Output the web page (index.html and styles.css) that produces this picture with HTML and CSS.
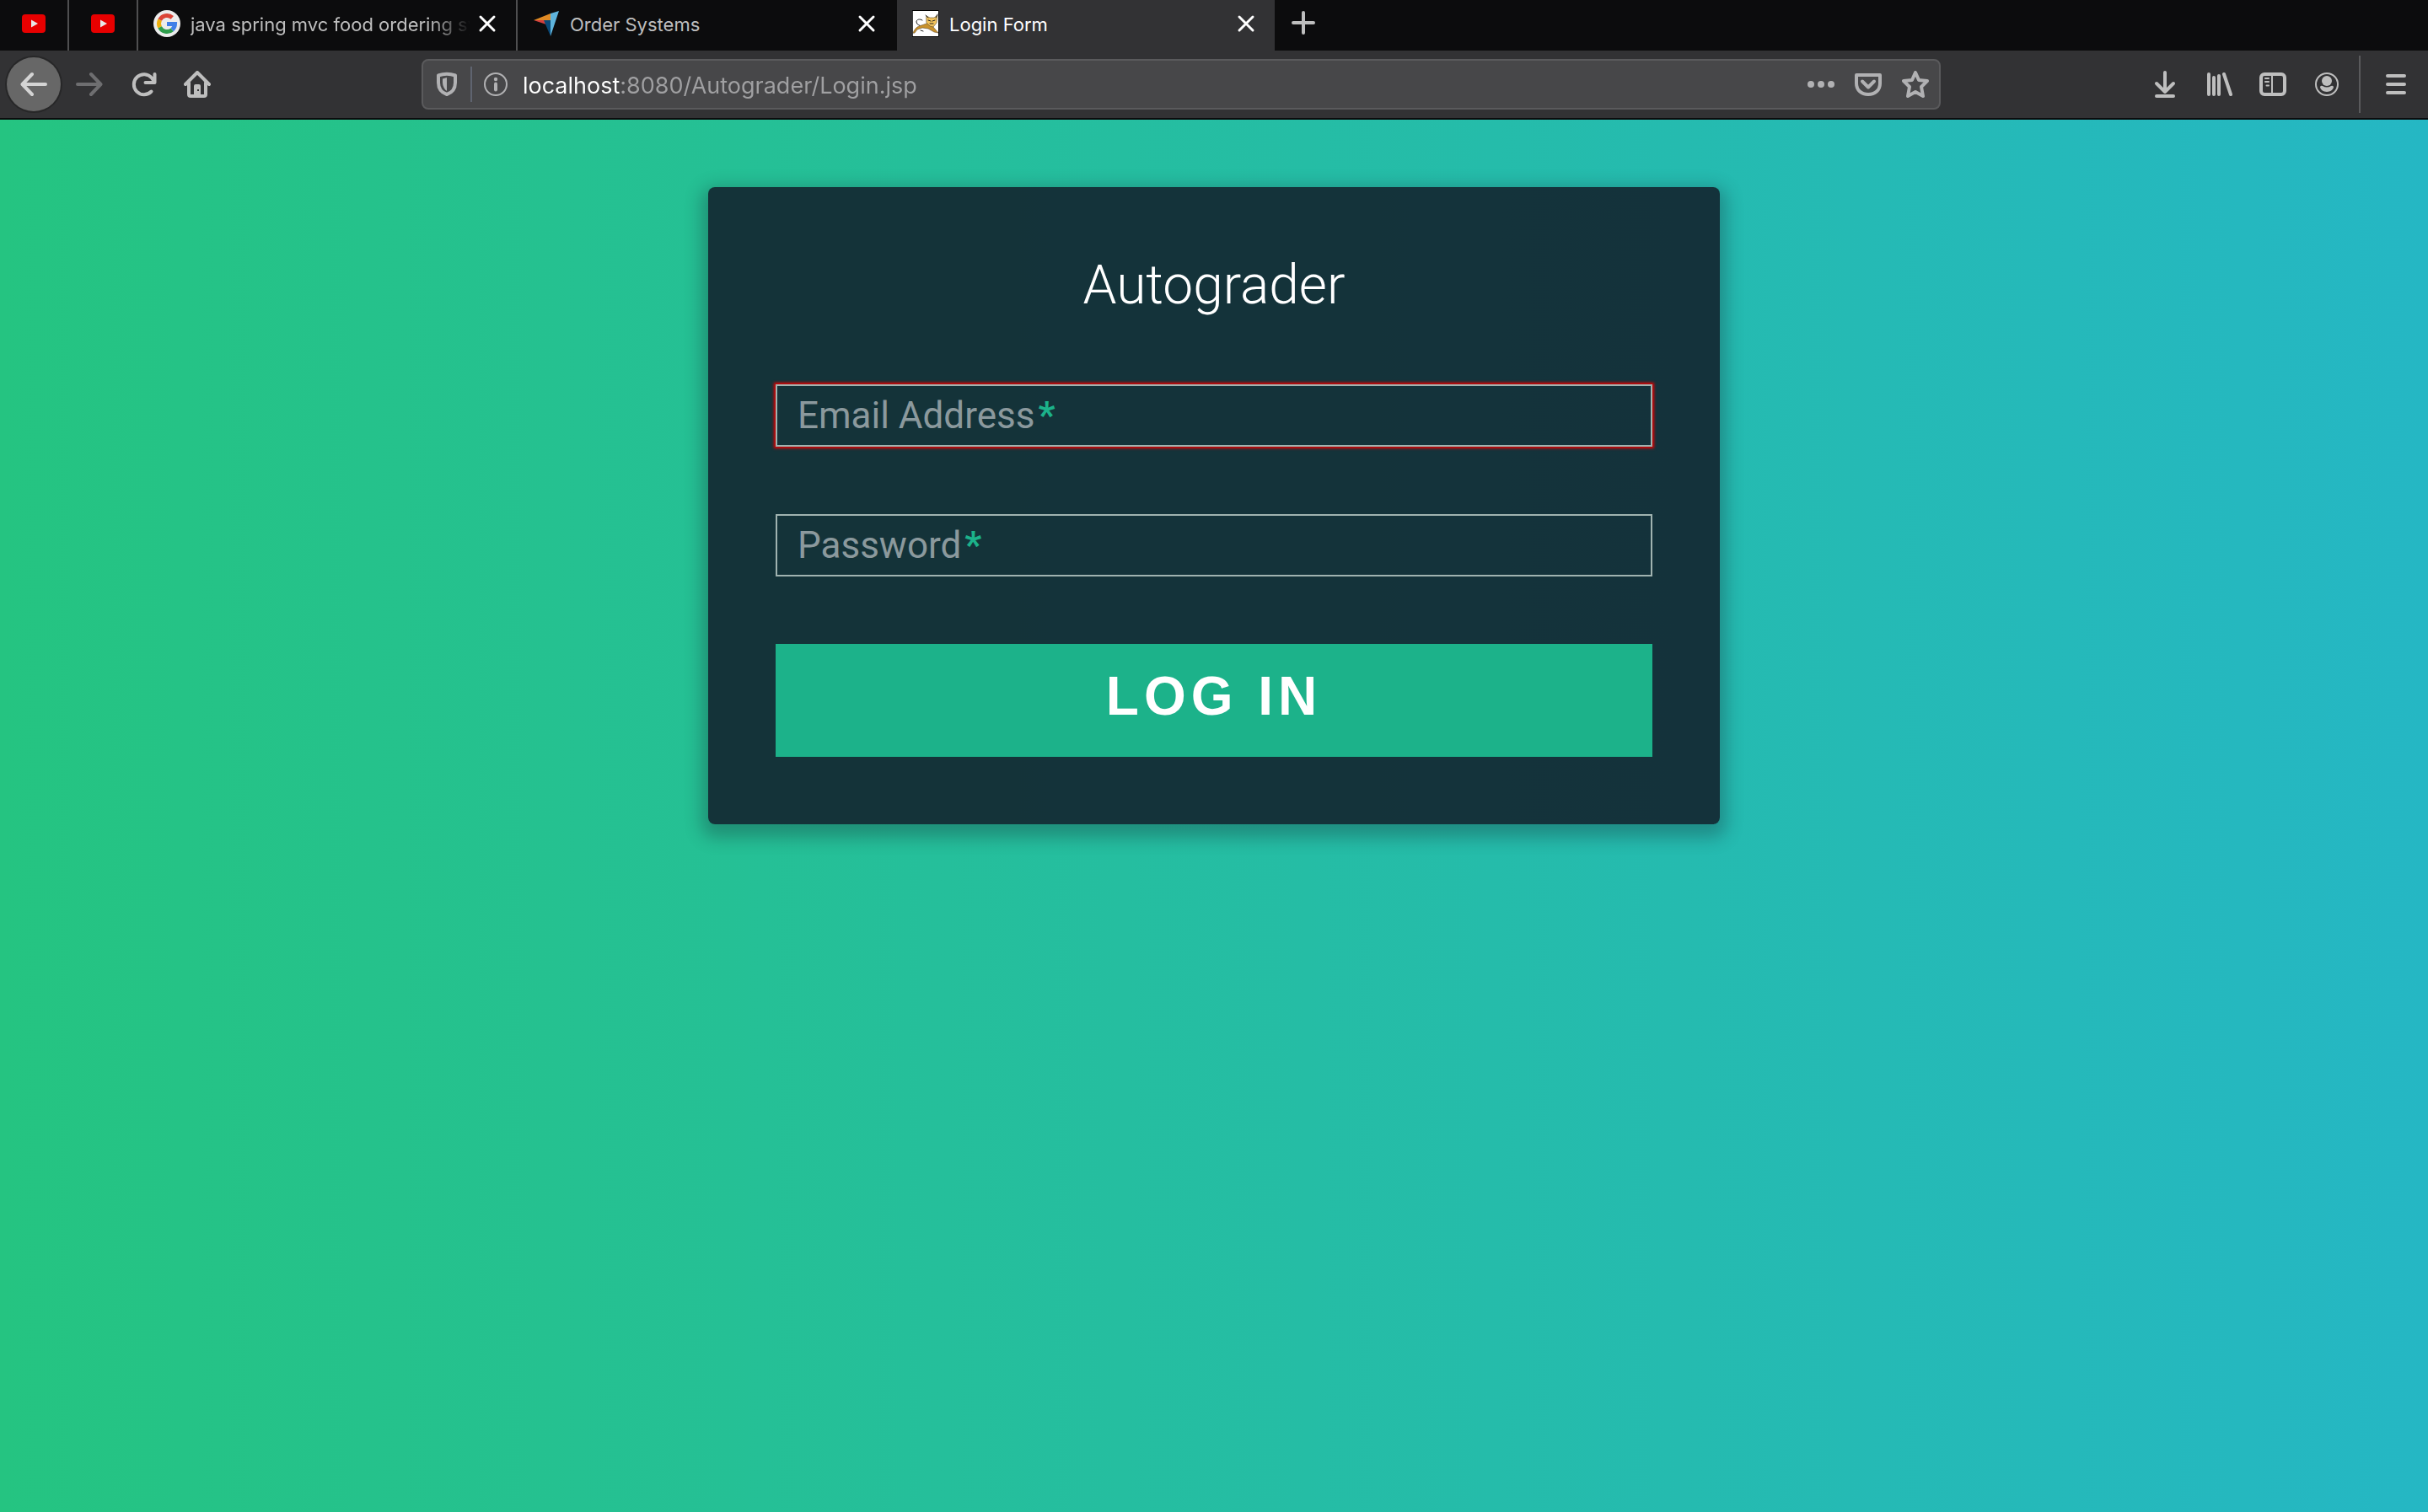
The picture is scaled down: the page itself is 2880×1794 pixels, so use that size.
FILE: index.html
```
<!DOCTYPE html>
<html lang="en">
<head>
<meta charset="utf-8">
<title>Login Form</title>
<link rel="stylesheet" href="styles.css">
</head>
<body>
<header class="browser">
  <nav class="tabs" aria-label="Tabs">
    <a class="tab tab-pinned" href="#" aria-label="YouTube">
      <svg class="icon" viewBox="0 0 32 32"><rect x="2" y="5" width="28" height="22" rx="4" fill="#e80000"/><path d="M13 11.500v9l8-4.500z" fill="#e8e8e8"/></svg>
    </a>
    <a class="tab tab-pinned" href="#" aria-label="YouTube">
      <svg class="icon" viewBox="0 0 32 32"><rect x="2" y="5" width="28" height="22" rx="4" fill="#e80000"/><path d="M13 11.500v9l8-4.500z" fill="#e8e8e8"/></svg>
    </a>
    <div class="tab">
      <svg class="icon" viewBox="0 0 32 32"><circle cx="16" cy="16" r="16" fill="#ececec"/><g fill="none" stroke-width="5" stroke-linecap="butt"><path d="M22.300 8.800A9.500 9.500 0 0 0 7.600 11.600" stroke="#db4437"/><path d="M7.600 11.600a9.500 9.500 0 0 0 0 8.800" stroke="#eeb00c"/><path d="M7.600 20.400a9.500 9.500 0 0 0 14.600 2.900" stroke="#2f9e4c"/><path d="M22.200 23.300A9.500 9.500 0 0 0 25.500 16.400H16" stroke="#3f7fe8" stroke-linejoin="miter"/></g></svg>
      <a class="tab-title tab-title-long" href="#">java spring mvc food ordering sy</a>
      <button class="tab-close" type="button" aria-label="Close tab"><svg class="icon" viewBox="0 0 32 32"><path d="M8 8l16 16M24 8L8 24"/></svg></button>
    </div>
    <div class="tab">
      <svg class="icon" viewBox="0 0 32 32"><path d="M1 12L21 4v8z" fill="#e08a24"/><path d="M1 12h13l2 5z" fill="#d43f3f"/><path d="M13 12h8v19z" fill="#0a4a78"/><path d="M21 4l10-3-10 30z" fill="#5fb4dc"/></svg>
      <a class="tab-title" href="#">Order Systems</a>
      <button class="tab-close" type="button" aria-label="Close tab"><svg class="icon" viewBox="0 0 32 32"><path d="M8 8l16 16M24 8L8 24"/></svg></button>
    </div>
    <div class="tab tab-active">
      <svg class="icon" viewBox="0 0 32 32"><path d="M.5.500h31v31H.500z" fill="#fff" stroke="#000" stroke-width="1"/><path d="M12 12c-3-2-7-1-7 2 0 4 5 3 5 6M10 24l3 1" fill="none" stroke="#222" stroke-width="1"/><path d="M1 27c2-5 5-8 10-9 3-1 6-2 8-3l6 5 6 7-5-1-7-4-7-1-6 2-3 4z" fill="#c8912c" stroke="#4a3820" stroke-width=".5"/><path d="M17 7l4 2h5l4-3-1 9-4 5-4-1-4-4z" fill="#f2c35c" stroke="#5a4a28" stroke-width=".6"/><path d="M16 6l3 3M30 5l-2 4M19 12l3 1m5-1l-3 1m-3 3h4" stroke="#222" stroke-width="1"/></svg>
      <a class="tab-title" href="#" aria-current="page">Login Form</a>
      <button class="tab-close" type="button" aria-label="Close tab"><svg class="icon" viewBox="0 0 32 32"><path d="M8 8l16 16M24 8L8 24"/></svg></button>
    </div>
    <button class="tab-new" type="button" aria-label="New tab"><svg class="icon" viewBox="0 0 32 32"><path d="M16 3v24M4 15h24"/></svg></button>
  </nav>
  <div class="toolbar">
    <button class="tool tool-back" type="button" aria-label="Back"><svg class="icon" viewBox="0 0 32 32"><path d="M30 16H3M14 4L2.500 16 14 28"/></svg></button>
    <button class="tool tool-disabled" type="button" aria-label="Forward" disabled><svg class="icon" viewBox="0 0 32 32"><path d="M2 16h27M18 4l11.500 12L18 28"/></svg></button>
    <button class="tool" type="button" aria-label="Reload"><svg class="icon" viewBox="0 0 32 32"><path d="M25.500 24.500A12 12 0 1 1 26 8.500l2 3M29.500 4v10H18.500"/></svg></button>
    <button class="tool" type="button" aria-label="Home"><svg class="icon" viewBox="0 0 32 32"><path d="M2 16L16 2l14 14M6 14v14q0 2 2 2h16q2 0 2-2V14"/><path class="solid" fill-rule="evenodd" d="M12 30V18q0-2 2-2h4q2 0 2 2v12zM16 22v2h2v-2z"/></svg></button>
    <div class="spacer"></div>
    <div class="address">
      <svg class="icon" viewBox="0 0 32 32"><path d="M6 5.500Q16 2 26 5.500V14c0 7-4 12-10 14C10 26 6 21 6 14z"/><path class="solid" d="M11 9.500L16 8v16c-3-2-5-6-5-10z"/></svg>
      <span class="address-divider"></span>
      <svg class="icon" viewBox="0 0 32 32"><circle cx="16" cy="16" r="13" stroke-width="2"/><path d="M16 15.500v7"/><circle class="solid" cx="16" cy="10" r="2.200"/></svg>
      <input class="address-input" type="text" aria-label="Address" value="localhost:8080/Autograder/Login.jsp">
      <div class="address-actions">
        <button class="address-button" type="button" aria-label="Page actions"><svg class="icon" viewBox="0 0 32 32"><g class="solid"><circle cx="4" cy="16" r="4"/><circle cx="16" cy="16" r="4"/><circle cx="28" cy="16" r="4"/></g></svg></button>
        <button class="address-button" type="button" aria-label="Save to Pocket"><svg class="icon" viewBox="0 0 32 32"><path d="M2 5h28v10c0 8-6 13-14 13S2 23 2 15z"/><path d="M9 12.500l7 7 7-7"/></svg></button>
        <button class="address-button" type="button" aria-label="Bookmark"><svg class="icon" viewBox="0 0 32 32"><path d="M16 2l4 9 10 1-7 7 2 11-9-5-9 5 2-11-7-7 10-1z"/></svg></button>
      </div>
    </div>
    <div class="spacer"></div>
    <button class="tool" type="button" aria-label="Downloads"><svg class="icon" viewBox="0 0 32 32"><path d="M16 2v23M6 15l10 10 10-10M6 30h20"/></svg></button>
    <button class="tool" type="button" aria-label="Library"><svg class="icon" viewBox="0 0 32 32"><path d="M4 4v24M10 8v20M16 6v22M22 4l8 24"/></svg></button>
    <button class="tool" type="button" aria-label="Sidebars"><svg class="icon" viewBox="0 0 32 32"><rect x="2" y="4" width="28" height="24" rx="4"/><path d="M15 4v24M7 9h4M7 13h4M8.500 17.500h2.500" stroke-width="2"/></svg></button>
    <button class="tool" type="button" aria-label="Account"><svg class="icon" viewBox="0 0 32 32"><circle cx="16" cy="16" r="13" stroke-width="2"/><circle class="solid" cx="16" cy="12" r="6"/><path class="solid" d="M8 19q1-2 3-1 5 3 10 0 2-1 3 1c0 3-4 6-8 6s-8-3-8-6z"/></svg></button>
    <span class="toolbar-divider"></span>
    <button class="tool" type="button" aria-label="Menu"><svg class="icon" viewBox="0 0 32 32"><path d="M6 6h20M6 16h20M6 26h20"/></svg></button>
  </div>
</header>
<main class="page">
  <form class="card">
    <h1 class="card-title">Autograder</h1>
    <div class="field">
      <label class="field-label" for="email">Email Address<span class="required">*</span></label>
      <input class="field-input field-invalid" id="email" type="email" required>
    </div>
    <div class="field">
      <label class="field-label" for="password">Password<span class="required">*</span></label>
      <input class="field-input" id="password" type="password" required>
    </div>
    <button class="submit" type="submit">Log In</button>
  </form>
</main>
</body>
</html>
```

FILE: styles.css
```
* {
  box-sizing: border-box;
}

body {
  margin: 0;
  min-height: 100vh;
  display: flex;
  flex-direction: column;
  font-family: Roboto, "Liberation Sans", sans-serif;
}

button,
input {
  font: inherit;
  color: inherit;
  margin: 0;
  padding: 0;
  border: 0;
  background: none;
}

/* Browser chrome */

.browser {
  font-family: Inter, "Liberation Sans", sans-serif;
  color: #bebebe;
  background: #323234;
  border-bottom: 2px solid #0c0c0d;
}

.icon {
  display: block;
  flex: none;
  width: 32px;
  height: 32px;
  fill: none;
  stroke-width: 4;
  stroke-linecap: round;
  stroke-linejoin: round;
}

.tool .icon,
.address .icon,
.tab-close .icon,
.tab-new .icon {
  stroke: currentColor;
}

.icon .solid {
  fill: currentColor;
  stroke: none;
}

.tabs {
  display: flex;
  height: 60px;
  background: #0c0c0d;
}

.tab {
  display: flex;
  align-items: center;
  flex: 0 1 450px;
  min-width: 0;
  padding: 0 18px 4px;
  border-right: 2px solid #4f4f50;
  font-size: 22px;
}

.tab-pinned {
  flex: 0 0 82px;
  padding: 0 24px 4px;
}

.tab:has(+ .tab-active) {
  border-right-color: #0c0c0d;
}

.tab-active {
  flex-basis: 448px;
  border-right: 0;
  background: #323234;
  color: #fff;
}

.tab-title {
  flex: 1;
  min-width: 0;
  margin: 0 4px 0 12px;
  padding-top: 2px;
  overflow: hidden;
  white-space: nowrap;
  line-height: 32px;
  color: inherit;
  text-decoration: none;
}

.tab-title-long {
  mask-image: linear-gradient(to left, transparent, #000 48px);
}

.tab-close {
  color: #fff;
}

.tab-close .icon {
  stroke-width: 3;
}

.tab-new {
  width: 64px;
  margin-left: 2px;
  padding: 0 16px 4px;
}

.toolbar {
  display: flex;
  align-items: center;
  height: 80px;
  padding: 0 6px 0 8px;
}

.tool {
  flex: none;
  width: 64px;
  height: 64px;
  padding: 16px;
}

.tool-back {
  margin-right: 2px;
  border-radius: 50%;
  background: #676767;
  color: #d4d4d4;
  box-shadow: 0 0 0 2px #272728;
}

.tool-disabled {
  color: #6e6e70;
}

.toolbar-divider {
  width: 2px;
  height: 68px;
  margin: 0 10px 0 6px;
  background: #5a5a5c;
}

.spacer {
  flex: 12 1 0;
}

.address {
  flex: 91 1 0;
  display: flex;
  align-items: center;
  gap: 12px;
  height: 60px;
  padding: 0 12px;
  border: 2px solid #5a5a5c;
  border-radius: 8px;
  background: #474749;
  color: #b1b1b3;
}

.address-divider {
  width: 2px;
  height: 42px;
  background: #5f6470;
}

/* The host is white, the rest of the address is dimmed */
.address-input {
  flex: 1;
  min-width: 0;
  margin-left: 4px;
  padding-top: 2px;
  height: 40px;
  font-size: 27px;
  background: linear-gradient(to right, #fff 115px, #a0a0a2 115px);
  background-clip: text;
  -webkit-text-fill-color: transparent;
}

.address-actions {
  display: flex;
  gap: 24px;
}

/* Login page */

.page {
  flex: 1;
  padding: 80px;
  background: linear-gradient(to right, #25c481, #25b7c4);
}

.card {
  display: flex;
  flex-direction: column;
  gap: 80px;
  max-width: 1200px;
  margin: 0 auto;
  padding: 80px;
  border-radius: 8px;
  background: rgba(19, 35, 47, 0.9);
  box-shadow: 0 8px 20px 8px rgba(19, 35, 47, 0.3);
}

.card-title {
  margin: 0;
  font-size: 64px;
  font-weight: 300;
  line-height: 74px;
  text-align: center;
  color: #fff;
}

.field {
  position: relative;
}

.field-label {
  position: absolute;
  left: 26px;
  top: 11px;
  font-size: 44px;
  line-height: 52px;
  color: #8b999d;
  pointer-events: none;
}

.required {
  margin-left: 4px;
  font-weight: 700;
  color: #1cb28a;
}

.field-input {
  display: block;
  width: 100%;
  height: 74px;
  padding: 10px 20px;
  border: 2px solid #a0b3b0;
  font-size: 44px;
  color: #fff;
}

.field-invalid {
  box-shadow: 0 0 3px 2px #e00000;
}

.submit {
  height: 134px;
  padding-bottom: 10px;
  background: #1cb28a;
  color: #fff;
  font-family: "Liberation Sans", Arial, sans-serif;
  font-size: 64px;
  font-weight: 700;
  letter-spacing: 6px;
  text-transform: uppercase;
}
```
